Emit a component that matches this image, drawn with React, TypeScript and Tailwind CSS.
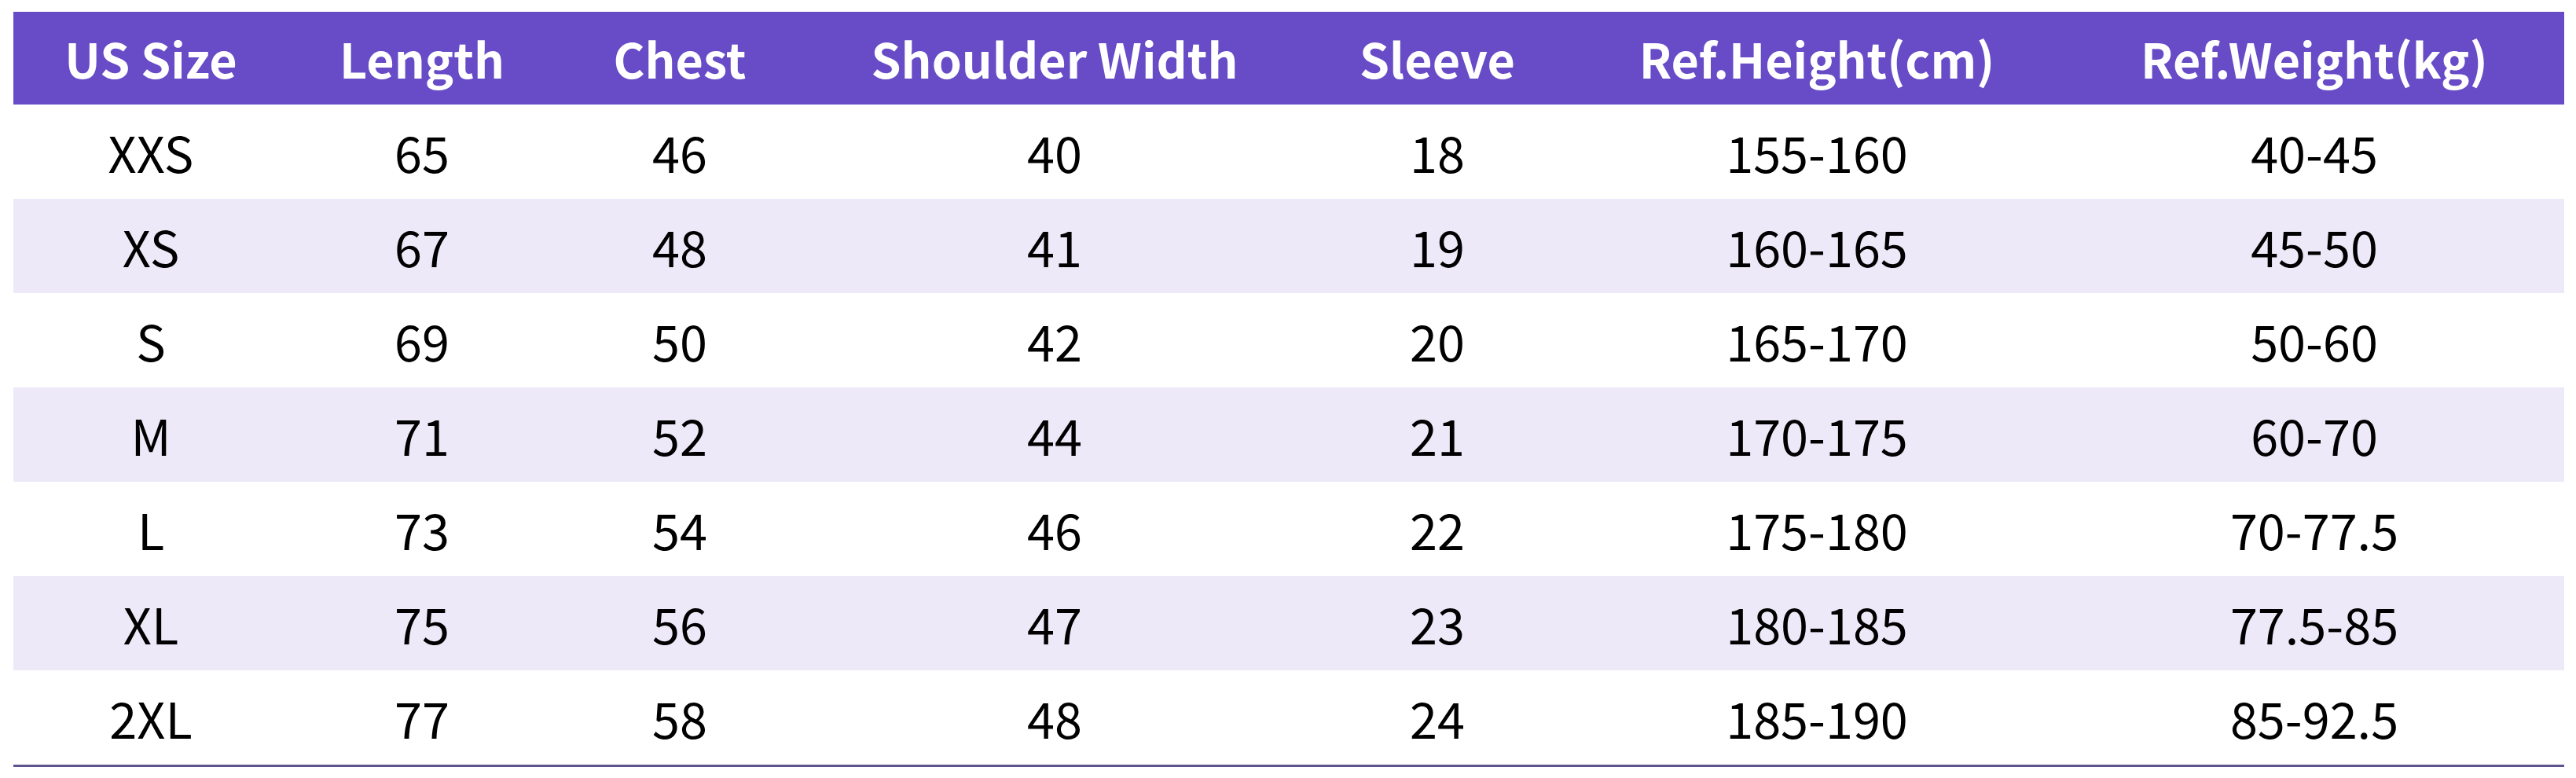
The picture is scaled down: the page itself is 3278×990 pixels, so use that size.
const headers = [
  "US Size",
  "Length",
  "Chest",
  "Shoulder Width",
  "Sleeve",
  "Ref.Height(cm)",
  "Ref.Weight(kg)",
];

const rows = [
  ["XXS", "65", "46", "40", "18", "155-160", "40-45"],
  ["XS", "67", "48", "41", "19", "160-165", "45-50"],
  ["S", "69", "50", "42", "20", "165-170", "50-60"],
  ["M", "71", "52", "44", "21", "170-175", "60-70"],
  ["L", "73", "54", "46", "22", "175-180", "70-77.5"],
  ["XL", "75", "56", "47", "23", "180-185", "77.5-85"],
  ["2XL", "77", "58", "48", "24", "185-190", "85-92.5"],
];

const cols = "grid grid-cols-[350px_340px_316px_638px_336px_630px_636px]";

export default function App() {
  return (
    <div
      className="w-[3278px] h-[990px] bg-white pt-[15px] pl-[17px]"
      style={{ fontFamily: '"Noto Sans CJK SC", "Noto Sans", sans-serif' }}
    >
      <div className="w-[3246px] border-b-[3px] border-[#5c5490]">
        <div className={`${cols} h-[118px] bg-[#674bc7] text-white font-bold text-[61px]`}>
          {headers.map((h) => (
            <div key={h} className="flex items-center justify-center">
              {h}
            </div>
          ))}
        </div>
        {rows.map((r, i) => (
          <div
            key={r[0]}
            className={`${cols} h-[120px] text-black text-[63px] ${
              i % 2 === 1 ? "bg-[#ede9f9]" : "bg-white"
            }`}
          >
            {r.map((c, j) => (
              <div key={j} className="flex items-center justify-center">
                {c}
              </div>
            ))}
          </div>
        ))}
      </div>
    </div>
  );
}
